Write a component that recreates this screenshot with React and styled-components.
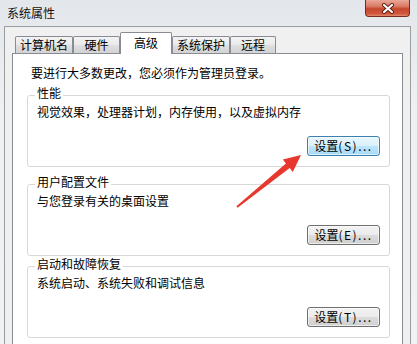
import styled, { createGlobalStyle } from "styled-components";

const GlobalStyle = createGlobalStyle`
  html, body {
    margin: 0;
    padding: 0;
    overflow: hidden;
  }
  body {
    font-family: "Noto Sans CJK SC", "Noto Sans", sans-serif;
    font-size: 12px;
    color: #000;
  }
`;

const tabs = [
  { label: "计算机名", width: 58 },
  { label: "硬件", width: 47 },
  { label: "高级", width: 52, active: true },
  { label: "系统保护", width: 58 },
  { label: "远程", width: 46 },
];

const groups = [
  { title: "性能", text: "视觉效果，处理器计划，内存使用，以及虚拟内存", hotkey: "S", focused: true, space: 6 },
  { title: "用户配置文件", text: "与您登录有关的桌面设置", hotkey: "E", space: 8 },
  { title: "启动和故障恢复", text: "系统启动、系统失败和调试信息", hotkey: "T", space: 1 },
];

const App = () => {
  return (
    <>
      <GlobalStyle />
      <Window>
        <TitleBar>
          <Title>系统属性</Title>
          <CloseButton>
            <svg width="14" height="11" viewBox="0 0 14 11">
              <path d="M3 2 L11 9 M11 2 L3 9" stroke="#5a1a10" strokeWidth="4" strokeLinecap="round" />
              <path d="M3 2 L11 9 M11 2 L3 9" stroke="#fff" strokeWidth="2.2" strokeLinecap="round" />
            </svg>
          </CloseButton>
        </TitleBar>
        <Frame>
          <TabStrip>
            {tabs.map((tab) => (
              <Tab key={tab.label} $width={tab.width} $active={tab.active}>
                {tab.label}
              </Tab>
            ))}
          </TabStrip>
          <Panel>
            <Intro>要进行大多数更改，您必须作为管理员登录。</Intro>
            {groups.map((group) => (
              <Group key={group.title} $space={group.space}>
                <Legend>{group.title}</Legend>
                <Desc>{group.text}</Desc>
                <Actions>
                  <Button $focused={group.focused}>
                    设置<Hotkey>({group.hotkey})...</Hotkey>
                  </Button>
                </Actions>
              </Group>
            ))}
          </Panel>
        </Frame>
        <Arrow width="80" height="64" viewBox="0 0 80 64">
          <polygon
            points="6.4,56.2 55.9,13.4 52.8,9.5 71,5 62.8,21.9 59.7,18 7.6,57.8"
            fill="#e8382e"
          />
        </Arrow>
      </Window>
    </>
  );
};

const Window = styled.div`
  position: relative;
  width: 417px;
  height: 344px;
  display: flex;
  flex-direction: column;
  overflow: hidden;
  background: linear-gradient(180deg, #e3e7eb 0%, #eef0f2 30%, #f1f2f3 100%);
`;

const TitleBar = styled.div`
  height: 26px;
  flex-shrink: 0;
  display: flex;
  align-items: flex-start;
  justify-content: space-between;
  padding: 0 7px;
`;

const Title = styled.div`
  margin-top: 6px;
  line-height: 14px;
  color: #111;
`;

const CloseButton = styled.div`
  width: 43px;
  height: 16px;
  display: flex;
  align-items: center;
  justify-content: center;
  border: 1px solid #7a2c1e;
  border-top: none;
  border-radius: 0 0 4px 4px;
  background: linear-gradient(180deg, #eaa898 0%, #d97a64 40%, #c7472f 55%, #d0563c 85%, #e38a6c 100%);
`;

const Frame = styled.div`
  flex: 1;
  display: flex;
  flex-direction: column;
  margin: 0 6px 0 4px;
  padding: 5px 7px 0 7px;
  border: 1px solid #9c9c9c;
  border-bottom: none;
  background: #f0f0f0;
`;

const TabStrip = styled.div`
  display: flex;
  align-items: flex-end;
  height: 21px;
  padding-left: 3px;
`;

const Tab = styled.div`
  position: relative;
  z-index: ${(p) => (p.$active ? 1 : 0)};
  box-sizing: border-box;
  width: ${(p) => p.$width}px;
  height: ${(p) => (p.$active ? 22 : 17)}px;
  margin-bottom: ${(p) => (p.$active ? -1 : 0)}px;
  display: flex;
  align-items: center;
  justify-content: center;
  padding-bottom: ${(p) => (p.$active ? 1 : 0)}px;
  line-height: 14px;
  border: 1px solid #898c95;
  border-bottom: none;
  border-radius: 2px 2px 0 0;
  background: ${(p) =>
    p.$active ? "#fff" : "linear-gradient(180deg, #f3f3f3 0%, #ebebeb 45%, #dedede 55%, #d3d3d3 100%)"};
`;

const Panel = styled.div`
  flex: 1;
  display: flex;
  flex-direction: column;
  padding: 12px 12px 10px 14px;
  border: 1px solid #898c95;
  background: #fff;
`;

const Intro = styled.div`
  line-height: 14px;
  padding-left: 4px;
`;

const Group = styled.fieldset`
  margin: ${(p) => p.$space}px 0 0 0;
  min-width: 0;
  display: flex;
  flex-direction: column;
  padding: 1px 9px 10px 9px;
  border: 1px solid #d8d8d8;
  border-radius: 3px;
`;

const Legend = styled.legend`
  margin-left: -2px;
  padding: 0 2px 4px 2px;
  line-height: 14px;
`;

const Desc = styled.div`
  line-height: 14px;
`;

const Actions = styled.div`
  display: flex;
  justify-content: flex-end;
  margin-top: 17px;
`;

const Button = styled.div`
  box-sizing: border-box;
  width: 73px;
  height: 20px;
  display: flex;
  align-items: center;
  justify-content: center;
  line-height: 14px;
  border: 1px solid ${(p) => (p.$focused ? "#3c7fb1" : "#707070")};
  border-radius: 3px;
  background: ${(p) =>
    p.$focused
      ? "linear-gradient(180deg, #eaf6fd 0%, #d9f0fc 50%, #bee6fd 50%, #a7d9f5 100%)"
      : "linear-gradient(180deg, #f2f2f2 0%, #ebebeb 50%, #dddddd 50%, #cfcfcf 100%)"};
  box-shadow: inset 0 0 0 1px rgba(255, 255, 255, 0.6);
`;

const Hotkey = styled.span`
  letter-spacing: 1.5px;
`;

const Arrow = styled.svg`
  position: absolute;
  left: 230px;
  top: 150px;
  pointer-events: none;
`;

export default App;
